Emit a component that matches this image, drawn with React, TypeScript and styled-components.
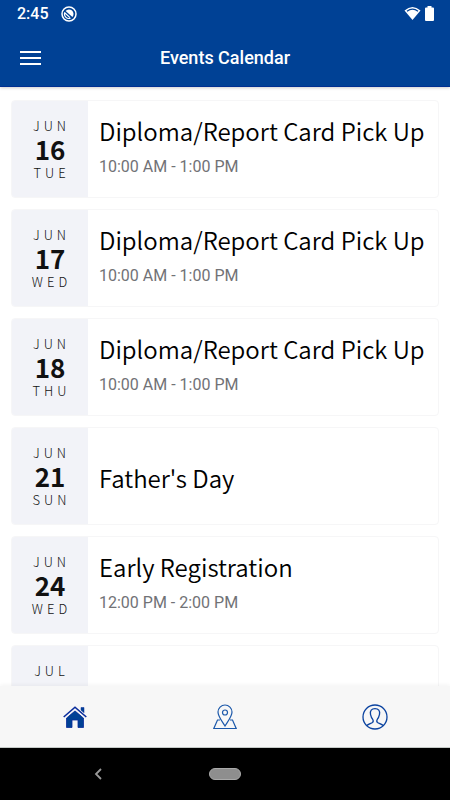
import React from "react";
import styled, { createGlobalStyle } from "styled-components";

const GlobalStyle = createGlobalStyle`
  *, *::before, *::after { box-sizing: border-box; }
  body { margin: 0; background: #fff; font-family: Roboto, sans-serif; }
  h1, h2, p, ul { margin: 0; padding: 0; }
  button { border: 0; padding: 0; background: none; cursor: pointer; }
`;

const calendarFont = `"Noto Sans CJK SC", "Noto Sans", sans-serif`;

const Screen = styled.div`
  display: flex;
  flex-direction: column;
  height: 100vh;
  overflow: hidden;
`;

const Header = styled.header`
  position: relative;
  z-index: 1;
  flex: none;
  background: #004195;
  color: #fff;
  border-bottom: 1px solid #002f91;
  box-shadow: 0 1px 3px rgba(0, 0, 0, 0.2);
`;

const StatusBar = styled.div`
  display: flex;
  align-items: center;
  height: 27px;
  padding: 0 16px 0 17px;
  font-size: 16px;
  font-weight: 500;
`;

const StatusIcons = styled.div`
  display: flex;
  gap: 4px;
  margin-left: auto;
`;

const Clock = styled.span`
  margin-right: 12px;
`;

const TitleBar = styled.div`
  display: grid;
  grid-template-columns: 60px 1fr 60px;
  align-items: center;
  height: 59px;
  padding-top: 2px;
`;

const MenuButton = styled.button`
  display: flex;
  align-items: center;
  height: 48px;
  padding-left: 20px;
  color: #fff;
`;

const Title = styled.h1`
  font-size: 18px;
  line-height: 24px;
  font-weight: 500;
  text-align: center;
`;

const EventList = styled.ul`
  display: flex;
  flex: 1;
  flex-direction: column;
  gap: 11px;
  min-height: 0;
  padding: 13px 11px;
  overflow-y: auto;
  list-style: none;
  scrollbar-width: none;
`;

const Card = styled.li`
  display: flex;
  flex: none;
  height: 98px;
  overflow: hidden;
  border: 1px solid #f6f6f7;
  border-radius: 4px;
  background: #fff;
`;

const DateBlock = styled.div`
  display: flex;
  flex: none;
  flex-direction: column;
  align-items: center;
  justify-content: center;
  width: 76px;
  background: #f2f3f8;
  color: #111;
  font-family: ${calendarFont};
`;

const DateLabel = styled.span`
  padding-left: 3px;
  font-size: 13px;
  line-height: 20px;
  font-weight: 300;
  letter-spacing: 4px;
`;

const DayNumber = styled.span`
  padding-bottom: 2px;
  font-size: 26px;
  line-height: 25px;
  font-weight: 700;
`;

const Details = styled.div`
  display: flex;
  flex: 1;
  flex-direction: column;
  justify-content: center;
  gap: 10px;
  min-width: 0;
  padding: 0 11px 6px;
`;

const EventName = styled.h2<{ $alone: boolean }>`
  padding-top: ${(p) => (p.$alone ? "10px" : "0")};
  color: #000;
  font-family: ${calendarFont};
  font-size: 24px;
  line-height: 32px;
  font-weight: 350;
  white-space: nowrap;
`;

const EventTime = styled.p`
  color: #717276;
  font-size: 16px;
  line-height: 20px;
`;

const TabBar = styled.nav`
  position: relative;
  z-index: 1;
  display: grid;
  flex: none;
  grid-template-columns: repeat(3, 1fr);
  height: 62px;
  border-bottom: 1px solid #c5cac7;
  background: #f7f7f7;
  box-shadow: 0 -1px 4px rgba(0, 0, 0, 0.05);
`;

const Tab = styled.button`
  display: flex;
  align-items: center;
  justify-content: center;
  color: #004195;
`;

const SystemBar = styled.div`
  display: grid;
  flex: none;
  grid-template-columns: 1fr 32px 1fr;
  align-items: center;
  height: 52px;
  background: #000;
`;

const BackButton = styled.button`
  display: flex;
  justify-self: center;
  padding-right: 14px;
`;

const HomePill = styled.button`
  height: 12px;
  border: 1px solid #aaa;
  border-radius: 6px;
  background: #8e8e8e;
`;

const events = [
  { month: "JUN", day: "16", weekday: "TUE", name: "Diploma/Report Card Pick Up", time: "10:00 AM - 1:00 PM" },
  { month: "JUN", day: "17", weekday: "WED", name: "Diploma/Report Card Pick Up", time: "10:00 AM - 1:00 PM" },
  { month: "JUN", day: "18", weekday: "THU", name: "Diploma/Report Card Pick Up", time: "10:00 AM - 1:00 PM" },
  { month: "JUN", day: "21", weekday: "SUN", name: "Father's Day", time: "" },
  { month: "JUN", day: "24", weekday: "WED", name: "Early Registration", time: "12:00 PM - 2:00 PM" },
  { month: "JUL", day: "03", weekday: "FRI", name: "", time: "" },
];

const DoNotTrackIcon = () => (
  <svg width="16" height="16" viewBox="0 0 16 16" fill="none" aria-hidden="true">
    <circle cx="8" cy="8" r="7" stroke="#fff" strokeWidth="1.5" />
    <path d="M4.6 5A4.5 4.5 0 0 1 11.4 11Z" fill="#fff" />
    <path d="M3.8 6.3A4.5 4.5 0 0 0 9.5 12.2M4 7l5 4.6" stroke="#fff" strokeWidth="1.2" />
  </svg>
);

const WifiIcon = () => (
  <svg width="17" height="15" viewBox="0 0 17 15" fill="none" aria-hidden="true">
    <path d="M.5 4.4Q8.5-2.6 16.5 4.4L8.5 14Z" fill="#fff" />
    <path d="M3 5.2Q8.5 1.2 14 5.2" stroke="#004195" strokeWidth="1.3" />
  </svg>
);

const BatteryIcon = () => (
  <svg width="9" height="15" viewBox="0 0 9 15" fill="#fff" aria-hidden="true">
    <path d="M2.5 0h4v1.5H8q1 0 1 1V14q0 1-1 1H1q-1 0-1-1V2.5q0-1 1-1h1.5Z" />
  </svg>
);

const MenuIcon = () => (
  <svg width="21" height="16" viewBox="0 0 21 16" stroke="#fff" strokeWidth="2" aria-hidden="true">
    <path d="M0 2h21M0 8h21M0 14h21" />
  </svg>
);

const HomeIcon = () => (
  <svg width="24" height="22" viewBox="0 0 24 22" fill="#004195" stroke="#0a2c9c" aria-hidden="true">
    <path d="M18 1.5h3V7l-3-2.5Z" strokeWidth=".5" />
    <path d="M3.5 12 12 4.8l8.5 7.2v9.5H15V14H9v7.5H3.5Z" strokeWidth=".8" />
    <path d="M.7 11.5 12 1.7l11.3 9.8" fill="none" stroke="#f7f7f7" strokeWidth="3.6" />
    <path d="M.7 11 12 1.2 23.3 11" fill="none" strokeWidth="1.6" />
  </svg>
);

const MapPinIcon = () => (
  <svg width="24" height="26" viewBox="0 0 24 26" fill="none" stroke="#1b58aa" strokeWidth="1.2" aria-hidden="true">
    <path d="M12 22C9 17 5 12.5 5 8a7 7 0 0 1 14 0c0 4.5-4 9-7 14Z" />
    <circle cx="12" cy="8.5" r="2.5" />
    <path d="M7 16H4.5L.8 24.5h22.4L19.5 16H17" />
  </svg>
);

const ProfileIcon = () => (
  <svg width="26" height="26" viewBox="0 0 26 26" fill="none" stroke="#0b43a0" strokeWidth="1.3" aria-hidden="true">
    <circle cx="13" cy="13" r="12" />
    <path d="M5 21.5c1-1.2 4-2 5.5-3 .8-.6.6-2.5 0-3.5-1.3-1.5-1.600-3-2-4.700C7.800 6.600 9.600 4.700 13 4.700s5.200 1.900 4.500 5.600c-.4 1.700-.7 3.200-2 4.700-.6 1-.8 2.900 0 3.500 1.500 1 4.500 1.800 5.500 3" />
  </svg>
);

const BackIcon = () => (
  <svg width="8" height="12" viewBox="0 0 8 12" fill="none" stroke="#999" strokeWidth="1.8" aria-hidden="true">
    <path d="M7 1 2 6l5 5" />
  </svg>
);

export default function App() {
  return (
    <Screen>
      <GlobalStyle />
      <Header>
        <StatusBar>
          <Clock>2:45</Clock>
          <DoNotTrackIcon />
          <StatusIcons>
            <WifiIcon />
            <BatteryIcon />
          </StatusIcons>
        </StatusBar>
        <TitleBar>
          <MenuButton aria-label="Menu">
            <MenuIcon />
          </MenuButton>
          <Title>Events Calendar</Title>
        </TitleBar>
      </Header>
      <EventList>
        {events.map((event) => (
          <Card key={event.month + event.day}>
            <DateBlock>
              <DateLabel>{event.month}</DateLabel>
              <DayNumber>{event.day}</DayNumber>
              <DateLabel>{event.weekday}</DateLabel>
            </DateBlock>
            <Details>
              {event.name && <EventName $alone={!event.time}>{event.name}</EventName>}
              {event.time && <EventTime>{event.time}</EventTime>}
            </Details>
          </Card>
        ))}
      </EventList>
      <TabBar>
        <Tab aria-label="Home">
          <HomeIcon />
        </Tab>
        <Tab aria-label="Map">
          <MapPinIcon />
        </Tab>
        <Tab aria-label="Profile">
          <ProfileIcon />
        </Tab>
      </TabBar>
      <SystemBar>
        <BackButton aria-label="Back">
          <BackIcon />
        </BackButton>
        <HomePill aria-label="Home screen" />
      </SystemBar>
    </Screen>
  );
}
